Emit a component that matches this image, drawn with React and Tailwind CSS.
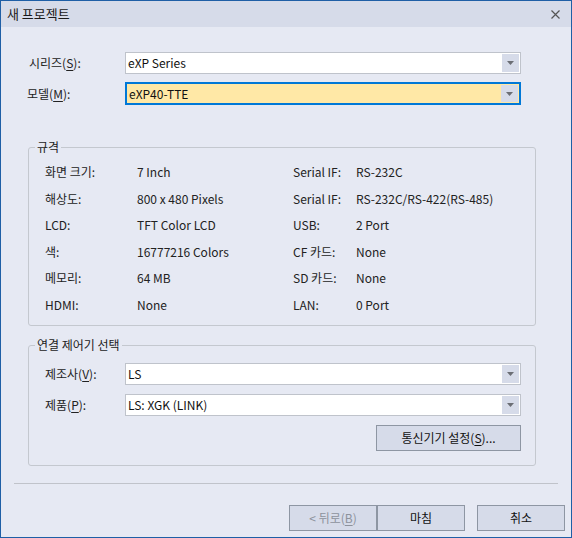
import React from "react";

// "새 프로젝트" dialog: series/model pickers, spec group box, controller group box

const FONT = { fontFamily: "'Noto Sans CJK KR', 'Noto Sans', sans-serif" };

const specsLeft = [
  ["화면 크기:", "7 Inch"],
  ["해상도:", "800 x 480 Pixels"],
  ["LCD:", "TFT Color LCD"],
  ["색:", "16777216 Colors"],
  ["메모리:", "64 MB"],
  ["HDMI:", "None"],
];

const specsRight = [
  ["Serial IF:", "RS-232C"],
  ["Serial IF:", "RS-232C/RS-422(RS-485)"],
  ["USB:", "2 Port"],
  ["CF 카드:", "None"],
  ["SD 카드:", "None"],
  ["LAN:", "0 Port"],
];

const Arrow = () => (
  <svg width="7" height="4" viewBox="0 0 7 4">
    <path d="M0 0H7L3.5 4Z" fill="#6b6e75" />
  </svg>
);

// Combo box with the small grey drop button on the right
const Combo = ({ value, active, className = "" }) => (
  <div
    className={`flex items-center w-[396px] ${
      active
        ? "h-[23px] border-2 border-[#0078d7] bg-[#ffe8a6]"
        : "h-[22px] border border-[#bfc3cb] bg-white"
    } ${className}`}
  >
    <span className="flex-1 pl-[2px] text-[12px] text-[#111]">{value}</span>
    <div className="w-[17px] self-stretch my-[1px] mr-[1px] bg-[#d6dbe9] flex items-center justify-center">
      <Arrow />
    </div>
  </div>
);

const Mn = ({ children }) => <span className="underline underline-offset-2">{children}</span>;

const Btn = ({ children, disabled, className = "" }) => (
  <button
    className={`h-[26px] w-[88px] border border-[#8e96a3] bg-[#d6dbe9] text-[12px] ${
      disabled ? "text-[#8d929c]" : "text-[#111]"
    } ${className}`}
  >
    {children}
  </button>
);

export default function App() {
  return (
    <div
      className="w-[572px] h-[538px] border border-[#1f5fa6] bg-[#e6e9f3] flex flex-col text-[#222]"
      style={FONT}
    >
      {/* title bar */}
      <div className="h-[26px] bg-[#d6dbe9] flex items-center justify-between pl-[6px] pr-[11px]">
        <span className="text-[13px] text-[#1a1a1a]">새 프로젝트</span>
        <svg width="9" height="9" viewBox="0 0 9 9">
          <path d="M0.5 0.5L8.5 8.5M8.5 0.5L0.5 8.5" stroke="#555" strokeWidth="1.2" />
        </svg>
      </div>

      {/* series / model */}
      <div className="mt-[25px] flex flex-col gap-[8px]">
        <div className="flex items-center">
          <span className="w-[124px] pl-[28px] text-[12px]">
            시리즈(<Mn>S</Mn>):
          </span>
          <Combo value="eXP Series" />
        </div>
        <div className="flex items-center">
          <span className="w-[124px] pl-[26px] text-[12px]">
            모델(<Mn>M</Mn>):
          </span>
          <Combo value="eXP40-TTE" active />
        </div>
      </div>

      {/* specs group */}
      <fieldset className="mt-[34px] ml-[27px] w-[508px] h-[187px] border border-[#c4c8cf] rounded-[3px]">
        <legend className="ml-[6px] px-[2px] text-[12px] leading-[16px]">규격</legend>
        <div className="mt-[4px] flex">
          <div className="flex flex-col">
            {specsLeft.map(([k, v]) => (
              <div key={k} className="h-[26.5px] flex items-center text-[12px]">
                <span className="w-[108px] pl-[16px]">{k}</span>
                <span className="w-[156px]">{v}</span>
              </div>
            ))}
          </div>
          <div className="flex flex-col">
            {specsRight.map(([k, v], i) => (
              <div key={i} className="h-[26.5px] flex items-center text-[12px]">
                <span className="w-[63px]">{k}</span>
                <span>{v}</span>
              </div>
            ))}
          </div>
        </div>
      </fieldset>

      {/* controller group */}
      <fieldset className="mt-[11px] ml-[27px] w-[508px] border border-[#c4c8cf] rounded-[3px] pb-[14px]">
        <legend className="ml-[6px] px-[2px] text-[12px] leading-[16px]">연결 제어기 선택</legend>
        <div className="mt-[10px] flex flex-col gap-[9px]">
          <div className="flex items-center">
            <span className="w-[96px] pl-[16px] text-[12px]">
              제조사(<Mn>V</Mn>):
            </span>
            <Combo value="LS" />
          </div>
          <div className="flex items-center">
            <span className="w-[96px] pl-[16px] text-[12px]">
              제품(<Mn>P</Mn>):
            </span>
            <Combo value="LS: XGK (LINK)" />
          </div>
        </div>
        <div className="mt-[9px] flex justify-end pr-[14px]">
          <Btn className="w-[145px]">
            통신기기 설정(<Mn>S</Mn>)...
          </Btn>
        </div>
      </fieldset>

      {/* separator */}
      <div className="mt-[17px] mx-[13px] h-px bg-[#c0c3ca]" />

      {/* wizard buttons */}
      <div className="mt-[21px] flex justify-end pr-[6px]">
        <Btn disabled>
          &lt; 뒤로(<Mn>B</Mn>)
        </Btn>
        <Btn>마침</Btn>
        <Btn className="ml-[12px]">취소</Btn>
      </div>
    </div>
  );
}
